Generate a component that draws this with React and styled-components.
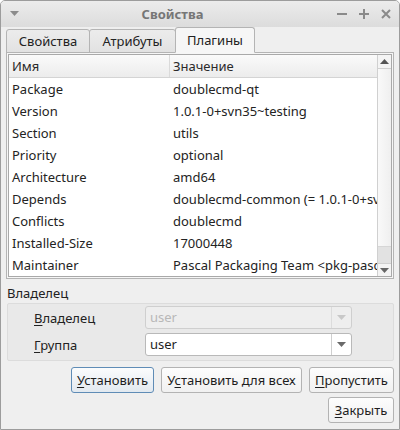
import React from "react";
import styled, { createGlobalStyle } from "styled-components";

const Global = createGlobalStyle`
  html, body {
    margin: 0;
    padding: 0;
    background: #ffffff;
  }
  * {
    box-sizing: border-box;
  }
`;

const Window = styled.div`
  display: flex;
  flex-direction: column;
  width: 400px;
  height: 430px;
  background: #efefef;
  border: 1px solid #9c9c9c;
  border-radius: 5px 5px 0 0;
  overflow: hidden;
  font-family: "Noto Sans", "DejaVu Sans", sans-serif;
  font-size: 13px;
  color: #232323;
`;

const TitleBar = styled.div`
  display: flex;
  align-items: center;
  height: 26px;
  padding: 0 6px 0 8px;
  background: linear-gradient(#ececec, #dcdcdc);
`;

const TitleText = styled.div`
  flex: 1;
  text-align: center;
  font-weight: bold;
  color: #767676;
  margin-right: 10px;
`;

const TitleButtons = styled.div`
  display: flex;
  gap: 8px;
  align-items: center;
`;

const Body = styled.div`
  display: flex;
  flex-direction: column;
  padding: 0 5px;
  flex: 1;
`;

const TabRow = styled.div`
  display: flex;
  align-items: flex-end;
  height: 26px;
  margin-bottom: -1px;
  position: relative;
  z-index: 1;
`;

const Tab = styled.div`
  display: flex;
  align-items: center;
  justify-content: center;
  width: ${(p) => p.$w}px;
  height: ${(p) => (p.$active ? 26 : 24)}px;
  margin-left: ${(p) => (p.$first ? 0 : -1)}px;
  background: ${(p) => (p.$active ? "#f6f6f6" : "linear-gradient(#ececec, #e2e2e2)")};
  border: 1px solid #b4b4b4;
  border-bottom-color: ${(p) => (p.$active ? "#f6f6f6" : "#b4b4b4")};
  border-radius: 3px 3px 0 0;
  color: #222;
`;

const Pane = styled.div`
  height: 227px;
  padding: 1px;
  border: 1px solid #b4b4b4;
  background: #f6f6f6;
`;

const Table = styled.div`
  display: flex;
  height: 223px;
  border: 1px solid #a9a9a9;
  background: #ffffff;
  overflow: hidden;
`;

const List = styled.div`
  flex: 1;
  display: flex;
  flex-direction: column;
  overflow: hidden;
`;

const Header = styled.div`
  display: grid;
  grid-template-columns: 161px 1fr;
  height: 23px;
  flex-shrink: 0;
  background: linear-gradient(#fafafa, #ececec);
  border-bottom: 1px solid #d4d4d4;
  color: #2a2a2a;
`;

const HeaderCell = styled.div`
  display: flex;
  align-items: center;
  padding-left: 3px;
  padding-bottom: 1px;
  border-right: 1px solid ${(p) => (p.$last ? "transparent" : "#dadada")};
`;

const Row = styled.div`
  display: grid;
  grid-template-columns: 161px 1fr;
  height: 22px;
  flex-shrink: 0;
`;

const Cell = styled.div`
  display: flex;
  align-items: center;
  padding-left: 3px;
  padding-bottom: 1px;
  white-space: nowrap;
  overflow: hidden;
`;

const ScrollBar = styled.div`
  display: flex;
  flex-direction: column;
  width: 14px;
  border-left: 1px solid #d0d0d0;
  background: #f2f2f2;
`;

const ScrollButton = styled.div`
  display: flex;
  align-items: center;
  justify-content: center;
  height: ${(p) => p.$h}px;
  background: #f4f4f4;
  border-bottom: ${(p) => (p.$top ? "1px solid #d0d0d0" : "none")};
  border-top: ${(p) => (p.$top ? "none" : "1px solid #d0d0d0")};
`;

const Thumb = styled.div`
  height: 178px;
  background: linear-gradient(90deg, #f9f9f9, #efefef);
  border-bottom: 1px solid #d6d6d6;
`;

const Track = styled.div`
  flex: 1;
  background: #e2e2e2;
`;

const GroupLabel = styled.div`
  height: 24px;
  display: flex;
  align-items: center;
  padding-left: 1px;
  padding-top: 4px;
  color: #222;
`;

const GroupFrame = styled.div`
  display: flex;
  flex-direction: column;
  gap: 4px;
  margin-left: 1px;
  padding: 2px 41px 4px 26px;
  border: 1px solid #dcdcdc;
  border-radius: 2px;
  background: #e9e9e9;
`;

const FieldRow = styled.div`
  display: flex;
  align-items: center;
`;

const FieldLabel = styled.div`
  width: 111px;
  color: #222;
`;

const Combo = styled.div`
  display: flex;
  align-items: center;
  width: 207px;
  height: 23px;
  border: 1px solid ${(p) => (p.$disabled ? "#cfcfcf" : "#b9b9b9")};
  border-radius: 3px;
  background: ${(p) => (p.$disabled ? "#eeeeee" : "#ffffff")};
  color: ${(p) => (p.$disabled ? "#b8b8b8" : "#1e1e1e")};
`;

const ComboText = styled.div`
  flex: 1;
  padding-left: 4px;
  padding-bottom: 1px;
`;

const ComboArrow = styled.div`
  display: flex;
  align-items: center;
  justify-content: center;
  width: 20px;
  height: 100%;
  border-left: 1px solid ${(p) => (p.$disabled ? "#dcdcdc" : "#cfcfcf")};
`;

const ButtonRow = styled.div`
  display: flex;
  justify-content: flex-end;
  gap: 7px;
  margin-top: ${(p) => p.$mt}px;
`;

const Button = styled.div`
  display: flex;
  align-items: center;
  justify-content: center;
  width: ${(p) => p.$w}px;
  height: 26px;
  padding-bottom: 1px;
  border: 1px solid ${(p) => (p.$default ? "#5f8cb6" : "#b3b3b3")};
  border-radius: 3px;
  background: ${(p) =>
    p.$default ? "linear-gradient(#fbfcfd, #e2e9f0)" : "linear-gradient(#fdfdfd, #f1f1f1)"};
  color: #1e1e1e;
`;

const U = styled.span`
  text-decoration: underline;
  text-underline-offset: 2px;
`;

const Down = ({ color = "#7a7a7a" }) => (
  <svg width="9" height="5" viewBox="0 0 9 5">
    <path d="M0 0 L9 0 L4.5 5 Z" fill={color} />
  </svg>
);

const Up = ({ color = "#555" }) => (
  <svg width="9" height="5" viewBox="0 0 9 5">
    <path d="M0 5 L9 5 L4.5 0 Z" fill={color} />
  </svg>
);

const rows = [
  ["Package", "doublecmd-qt"],
  ["Version", "1.0.1-0+svn35~testing"],
  ["Section", "utils"],
  ["Priority", "optional"],
  ["Architecture", "amd64"],
  ["Depends", "doublecmd-common (= 1.0.1-0+svn35~testing)"],
  ["Conflicts", "doublecmd"],
  ["Installed-Size", "17000448"],
  ["Maintainer", "Pascal Packaging Team <pkg-pascal-devel@lists>"],
];

export default function App() {
  return (
    <>
      <Global />
      <Window>
        <TitleBar>
          <svg width="11" height="6" viewBox="0 0 11 6">
            <path d="M1 0 L10 0 L5.5 5 Z" fill="#8c8c8c" />
          </svg>
          <TitleText>Свойства</TitleText>
          <TitleButtons>
            <svg width="14" height="14" viewBox="0 0 14 14">
              <rect x="2" y="6" width="10" height="2" fill="#8a8a8a" />
            </svg>
            <svg width="14" height="14" viewBox="0 0 14 14">
              <rect x="2" y="6" width="10" height="2" fill="#8a8a8a" />
              <rect x="6" y="2" width="2" height="10" fill="#8a8a8a" />
            </svg>
            <svg width="14" height="14" viewBox="0 0 14 14">
              <path d="M3 3 L11 11 M11 3 L3 11" stroke="#8a8a8a" strokeWidth="2" />
            </svg>
          </TitleButtons>
        </TitleBar>
        <Body>
          <TabRow>
            <Tab $w={84} $first>Свойства</Tab>
            <Tab $w={87}>Атрибуты</Tab>
            <Tab $w={80} $active>Плагины</Tab>
          </TabRow>
          <Pane>
            <Table>
              <List>
                <Header>
                  <HeaderCell>Имя</HeaderCell>
                  <HeaderCell $last>Значение</HeaderCell>
                </Header>
                {rows.map(([k, v]) => (
                  <Row key={k}>
                    <Cell>{k}</Cell>
                    <Cell>{v}</Cell>
                  </Row>
                ))}
              </List>
              <ScrollBar>
                <ScrollButton $h={14} $top>
                  <Up />
                </ScrollButton>
                <Thumb />
                <Track />
                <ScrollButton $h={13}>
                  <Down color="#666" />
                </ScrollButton>
              </ScrollBar>
            </Table>
          </Pane>
          <GroupLabel>Владелец</GroupLabel>
          <GroupFrame>
            <FieldRow>
              <FieldLabel>
                <U>В</U>ладелец
              </FieldLabel>
              <Combo $disabled>
                <ComboText>user</ComboText>
                <ComboArrow $disabled>
                  <Down color="#c8c8c8" />
                </ComboArrow>
              </Combo>
            </FieldRow>
            <FieldRow>
              <FieldLabel>
                <U>Г</U>руппа
              </FieldLabel>
              <Combo>
                <ComboText>user</ComboText>
                <ComboArrow>
                  <Down color="#6a6a6a" />
                </ComboArrow>
              </Combo>
            </FieldRow>
          </GroupFrame>
          <ButtonRow $mt={6}>
            <Button $w={83} $default>
              <span>
                <U>У</U>становить
              </span>
            </Button>
            <Button $w={141}>
              <span>
                У<U>с</U>тановить для всех
              </span>
            </Button>
            <Button $w={85}>
              <span>
                <U>П</U>ропустить
              </span>
            </Button>
          </ButtonRow>
          <ButtonRow $mt={4}>
            <Button $w={66}>
              <span>
                <U>З</U>акрыть
              </span>
            </Button>
          </ButtonRow>
        </Body>
      </Window>
    </>
  );
}
